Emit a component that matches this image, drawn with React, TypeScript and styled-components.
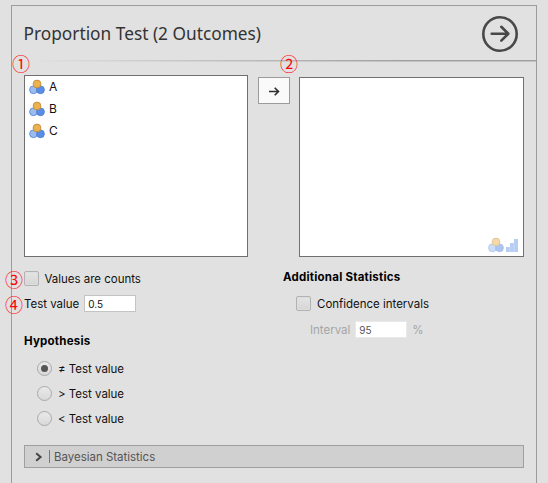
import React from "react";
import styled, { createGlobalStyle } from "styled-components";

const GlobalStyle = createGlobalStyle`
  * { box-sizing: border-box; }
  body {
    margin: 0;
    background: #e1e1e1;
    overflow: hidden;
    color: #111;
    font: 11.5px/16px Inter, "Liberation Sans", sans-serif;
  }
`;

const Page = styled.main`
  position: relative;
  height: 483px;
  padding: 5px 11px 0;
  overflow: hidden;
`;

const Panel = styled.section`
  height: 490px;
  border: 1px solid #9c9c9c;
`;

const Header = styled.header`
  display: flex;
  align-items: center;
  justify-content: space-between;
  height: 56px;
  padding: 0 18px 0 11.5px;
  background:
    linear-gradient(90deg, #e1e1e1 3%, #a0a0a0 75%) 0 54px / 100% 1px no-repeat,
    linear-gradient(90deg, #e1e1e1 3%, #c2c2c2 75%) 0 55px / 100% 1px no-repeat;
`;

const Title = styled.h1`
  margin: 0 0 1px;
  font: 400 17.3px/24px "Noto Sans", sans-serif;
  letter-spacing: 0;
  color: #333;
`;

const RunButton = styled.button`
  width: 36px;
  height: 36px;
  padding: 0;
  border: 0;
  background: none;
  svg { display: block; }
`;

const Content = styled.div`
  padding: 13px 12px 0;
`;

const Transfer = styled.div`
  display: grid;
  grid-template-columns: 224px 32px 225px;
  justify-content: space-between;
  height: 182px;
`;

const VariableList = styled.ul`
  margin: 0;
  padding: 0 0 0 4px;
  list-style: none;
  border: 1px solid #707070;
  background: #fff;
`;

const Variable = styled.li`
  display: flex;
  align-items: center;
  gap: 4px;
  height: 22px;
`;

const TargetBox = styled.div`
  display: flex;
  align-items: flex-end;
  justify-content: flex-end;
  gap: 1px;
  margin-top: 2px;
  padding: 0 4px 3px 0;
  border: 1px solid #707070;
  background: #fff;
  svg { opacity: 0.5; }
`;

const MoveButton = styled.button`
  display: flex;
  align-items: center;
  justify-content: center;
  height: 27px;
  margin-top: 2px;
  padding: 0;
  border: 1px solid #9c9c9c;
  background: #fafafa;
`;

const Options = styled.div`
  display: grid;
  grid-template-columns: 259px 1fr;
  height: 188px;
`;

const Column = styled.div<{ $top: number }>`
  padding-top: ${(p) => p.$top}px;
`;

const Row = styled.div<{ $indent?: number; $height?: number; $gap?: number; $muted?: boolean }>`
  display: flex;
  align-items: center;
  gap: ${(p) => p.$gap ?? 6}px;
  height: ${(p) => p.$height ?? 25}px;
  padding-left: ${(p) => p.$indent ?? 0}px;
  color: ${(p) => (p.$muted ? "#a5a5a5" : "#111")};
`;

const Label = styled.span`
  padding-top: 1px;
  white-space: nowrap;
  letter-spacing: -0.02px;
`;

const VariableName = styled.span`
  padding-bottom: 1px;
  font-size: 12px;
`;

const Heading = styled.h2`
  margin: 0;
  font-size: 11.5px;
  font-weight: 700;
  line-height: 24px;
  letter-spacing: 0.22px;
  color: #000;
`;

const SectionRow = styled(Row)`
  align-items: flex-end;
  padding-bottom: 3px;
`;

const CheckBox = styled.span`
  width: 15px;
  height: 15px;
  border: 1px solid #b2b2b2;
  border-radius: 2px;
  background: linear-gradient(#e4e4e4, #d6d6d6);
  box-shadow: inset 0 0 0 1px #dedede;
`;

const Radio = styled.span<{ $checked?: boolean }>`
  display: flex;
  align-items: center;
  justify-content: center;
  width: 15px;
  height: 15px;
  border: 1px solid #a9a9a9;
  border-radius: 50%;
  background: linear-gradient(#e9e9e9, #d9d9d9);
  &::after {
    content: "";
    width: 7px;
    height: 7px;
    border-radius: 50%;
    background: ${(p) => (p.$checked ? "#555" : "transparent")};
  }
`;

const Field = styled.input<{ $muted?: boolean }>`
  width: 52px;
  height: 17px;
  padding: 1px 3px 0;
  border: 1px solid ${(p) => (p.$muted ? "#e9e9e9" : "#c4c4c4")};
  border-radius: 0;
  background: #fff;
  color: ${(p) => (p.$muted ? "#555" : "#111")};
  font: 10px/14px Inter, sans-serif;
`;

const Collapsible = styled.div`
  display: flex;
  align-items: center;
  height: 23px;
  padding-left: 10px;
  border: 1px solid #a0a0a0;
  background: #d0d0d0;
  color: #555;
`;

const Divider = styled.span`
  width: 1px;
  height: 13px;
  margin: 0 4px 0 6px;
  background: #777;
`;

const Marker = styled.span<{ $x: number; $y: number }>`
  position: absolute;
  left: ${(p) => p.$x}px;
  top: ${(p) => p.$y}px;
  width: 18px;
  text-align: center;
  font: 400 18px/18px "Noto Sans CJK SC", sans-serif;
  color: #ff0509;
`;

const NominalIcon = () => (
  <svg width="16" height="16" viewBox="0 0 16 16">
    <circle cx="4.5" cy="10.8" r="3.9" fill="#9abcf0" stroke="#5383d3" strokeWidth=".8" />
    <circle cx="11.5" cy="10.8" r="3.9" fill="#5a8ee6" stroke="#4a7bd0" strokeWidth=".8" />
    <circle cx="8" cy="5" r="3.9" fill="#ecb252" stroke="#b98730" strokeWidth=".8" />
  </svg>
);

const OrdinalIcon = () => (
  <svg width="14" height="16" viewBox="0 0 14 16">
    <path d="M1 10h4v5H1zM5 6h4v9H5zM9 2h4v13H9z" fill="#6f9fea" />
    <path d="M5 10v5M9 6v9" stroke="#a9c7f7" strokeWidth=".7" />
  </svg>
);

export default function App() {
  return (
    <>
      <GlobalStyle />
      <Page>
        <Panel>
          <Header>
            <Title>Proportion Test (2 Outcomes)</Title>
            <RunButton aria-label="Hide options">
              <svg width="36" height="36" viewBox="0 0 36 36" fill="none" stroke="#484848">
                <circle cx="18" cy="18" r="16.7" strokeWidth="2.6" />
                <path d="M9.7 17.7H26M19.3 10.8l7 6.9-7 6.9" strokeWidth="2.6" strokeLinecap="round" strokeLinejoin="round" />
              </svg>
            </RunButton>
          </Header>
          <Content>
            <Transfer>
              <VariableList>
                {["A", "B", "C"].map((name) => (
                  <Variable key={name}>
                    <NominalIcon />
                    <VariableName>{name}</VariableName>
                  </Variable>
                ))}
              </VariableList>
              <MoveButton aria-label="Assign variable">
                <svg width="12" height="12" viewBox="0 0 12 12" fill="none" stroke="#2f2f2f" strokeWidth="1.6">
                  <path d="M1 6.5h9.5M6.7 2.7l3.8 3.8-3.8 3.8" />
                </svg>
              </MoveButton>
              <TargetBox>
                <NominalIcon />
                <OrdinalIcon />
              </TargetBox>
            </Transfer>
            <Options>
              <Column $top={9}>
                <Row $gap={5.5}>
                  <CheckBox />
                  <Label>Values are counts</Label>
                </Row>
                <Row $gap={5}>
                  <Label>Test value</Label>
                  <Field defaultValue="0.5" />
                </Row>
                <SectionRow $height={40}>
                  <Heading>Hypothesis</Heading>
                </SectionRow>
                {["≠", ">", "<"].map((sign, i) => (
                  <Row key={sign} $indent={13}>
                    <Radio $checked={i === 0} />
                    <Label>{sign} Test value</Label>
                  </Row>
                ))}
              </Column>
              <Column $top={8}>
                <Heading>Additional Statistics</Heading>
                <Row $indent={13} $height={29}>
                  <CheckBox />
                  <Label>Confidence intervals</Label>
                </Row>
                <Row $indent={27} $height={23} $gap={5} $muted>
                  <Label>Interval</Label>
                  <Field $muted defaultValue="95" />
                  <Label>%</Label>
                </Row>
              </Column>
            </Options>
            <Collapsible>
              <svg width="8" height="10" viewBox="0 0 8 10" fill="none" stroke="#444" strokeWidth="2">
                <path d="M1.2 1.2 5.6 5 1.2 8.8" />
              </svg>
              <Divider />
              <Label>Bayesian Statistics</Label>
            </Collapsible>
          </Content>
        </Panel>
        <Marker $x={12} $y={54}>①</Marker>
        <Marker $x={280} $y={54}>②</Marker>
        <Marker $x={5} $y={270}>③</Marker>
        <Marker $x={5} $y={295}>④</Marker>
      </Page>
    </>
  );
}
